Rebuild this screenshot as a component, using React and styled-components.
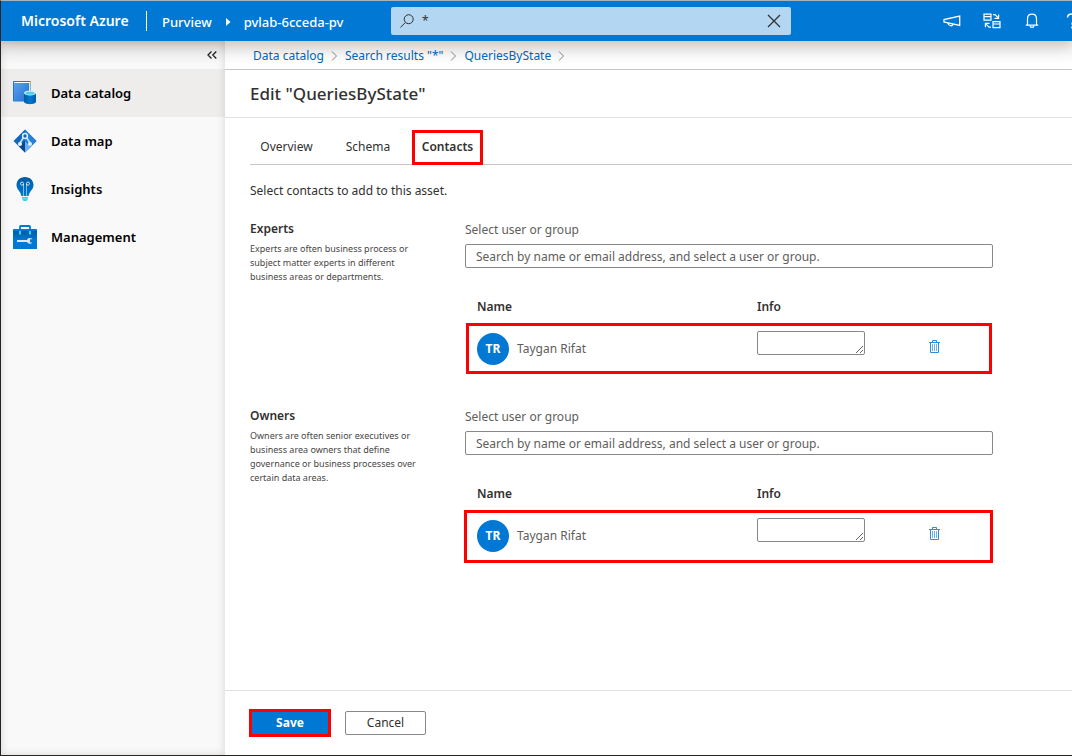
import React from 'react'
import styled, { createGlobalStyle } from 'styled-components'

const GlobalStyle = createGlobalStyle`
  * {
    box-sizing: border-box;
  }
  body {
    margin: 0;
    font-family: "Noto Sans", "Open Sans", sans-serif;
    font-size: 12px;
    line-height: 16px;
    color: #323130;
    background: #fff;
  }
  button, input, textarea {
    font: inherit;
    color: inherit;
  }
`

const Page = styled.div`
  display: flex;
  flex-direction: column;
  min-height: 100vh;
  border-top: 1px solid #a8b4bc;
  border-left: 1px solid #252423;
  border-bottom: 1px solid #252423;
  overflow: hidden;
`

const Header = styled.header`
  display: flex;
  align-items: center;
  flex: none;
  height: 40px;
  padding-left: 20px;
  color: #fff;
  background: #0078d4;
  box-shadow: 0 2px 18px 4px rgba(0, 0, 0, 0.25);
  z-index: 1;
`

const Brand = styled.a`
  width: 126px;
  padding-right: 16px;
  border-right: 1px solid #fff;
  font-size: 14px;
  line-height: 20px;
  font-weight: 600;
  color: inherit;
  text-decoration: none;
  white-space: nowrap;
`

const Path = styled.nav`
  display: flex;
  align-items: center;
  gap: 10px;
  width: 244px;
  padding-left: 15px;
  padding-top: 2px;
  font-size: 13px;
  font-weight: 500;
  white-space: nowrap;
  a {
    color: inherit;
    text-decoration: none;
  }
`

const SearchBox = styled.label`
  display: flex;
  align-items: center;
  gap: 8px;
  flex: 0 1 400px;
  height: 28px;
  padding: 0 9px;
  border-radius: 2px;
  color: #323130;
  background: #b3d7f2;
  input {
    flex: 1;
    min-width: 0;
    padding: 0;
    border: 0;
    outline: 0;
    background: none;
  }
`

const IconButton = styled.button`
  display: flex;
  align-items: center;
  justify-content: center;
  flex: none;
  width: ${props => props.$width || 16}px;
  height: ${props => props.$height || 16}px;
  padding: 0;
  border: 0;
  color: inherit;
  background: none;
`

const HeaderActions = styled.div`
  display: flex;
  flex: none;
  margin-left: auto;
  margin-right: -20px;
`

const Body = styled.div`
  display: flex;
  flex: 1;
`

const Sidebar = styled.aside`
  flex: none;
  width: 224px;
  background: #f9f9f9;
  box-shadow: inset 0 0 8px rgba(0, 0, 0, 0.14);
`

const Collapse = styled.div`
  display: flex;
  align-items: center;
  justify-content: flex-end;
  height: 28px;
  padding-right: 5px;
`

const NavItem = styled.a`
  display: flex;
  align-items: center;
  gap: 14px;
  height: 48px;
  padding-left: 12px;
  font-size: 13px;
  font-weight: 600;
  color: #000;
  text-decoration: none;
  background: ${props => (props.$active ? 'rgba(40, 20, 0, 0.05)' : 'none')};
`

const Main = styled.main`
  display: flex;
  flex-direction: column;
  flex: 1;
  min-width: 0;
`

const Breadcrumb = styled.nav`
  display: flex;
  align-items: center;
  gap: 7px;
  height: 29px;
  padding-top: 1px;
  padding-left: 28px;
  border-bottom: 1px solid #c8c6c4;
  a {
    color: #0069c2;
    text-decoration: none;
  }
`

const TitleBar = styled.div`
  display: flex;
  align-items: center;
  height: 48px;
  padding-left: 25px;
  border-bottom: 1px solid #e1dfdd;
  h1 {
    margin: 0;
    font-size: 17px;
    line-height: 22px;
    font-weight: 500;
  }
`

const Content = styled.div`
  flex: 1;
  padding: 12px 0 0 25px;
`

const Tabs = styled.div`
  display: flex;
  height: 35px;
  border-bottom: 1px solid #c8c6c4;
`

const Tab = styled.button`
  height: 35px;
  padding: 0 0 2px;
  margin-left: ${props => props.$gap}px;
  border: ${props => (props.$marked ? '3px solid #f00' : '0')};
  font-weight: ${props => (props.$marked ? 600 : 400)};
  width: ${props => props.$width}px;
  white-space: nowrap;
  background: none;
`

const Intro = styled.p`
  margin: 18px 0 22px;
`

const Section = styled.section`
  display: grid;
  grid-template-columns: 180px minmax(0, 528px);
  column-gap: 35px;
  margin-bottom: 34px;
  h2 {
    margin: 0 0 5px;
    font-size: 12px;
    line-height: 16px;
    font-weight: 600;
  }
`

const Hint = styled.p`
  margin: 0;
  font-size: 9px;
  line-height: 14px;
  color: #484644;
`

const Field = styled.label`
  display: block;
  padding-top: 1px;
  color: #605e5c;
  input {
    display: block;
    width: 100%;
    height: 24px;
    margin-top: 6px;
    padding: 0 10px;
    border: 1px solid #8a8886;
    border-radius: 2px;
    outline: 0;
  }
  input::placeholder {
    color: #605e5c;
    opacity: 1;
  }
`

const ContactTable = styled.table`
  width: 100%;
  margin-top: 28px;
  table-layout: fixed;
  border-collapse: collapse;
  th {
    height: 27px;
    padding: 3px 12px 0;
    text-align: left;
    vertical-align: top;
    font-weight: 600;
  }
  td {
    height: 51px;
    padding: 8px 12px 0;
    vertical-align: top;
  }
`

const ContactRow = styled.tr`
  position: relative;
  &::after {
    content: "";
    position: absolute;
    inset: ${props => props.$inset};
    border: 3px solid #f00;
    pointer-events: none;
  }
`

const Person = styled.div`
  display: flex;
  align-items: center;
  gap: 8px;
  padding-top: 2px;
  color: #605e5c;
`

const Avatar = styled.span`
  display: flex;
  align-items: center;
  justify-content: center;
  width: 32px;
  height: 32px;
  border-radius: 50%;
  font-weight: 700;
  color: #fff;
  background: #0078d4;
`

const InfoBox = styled.textarea`
  display: block;
  width: 108px;
  height: 24px;
  border: 1px solid #8a8886;
  border-radius: 2px;
`

const Footer = styled.footer`
  display: flex;
  align-items: center;
  gap: 14px;
  height: 65px;
  padding-left: 24px;
  border-top: 1px solid #e1dfdd;
`

const SaveButton = styled.button`
  width: 82px;
  height: 28px;
  padding: 0;
  border: 3px solid #f00;
  font-weight: 700;
  color: #fff;
  background: #0078d4;
`

const CancelButton = styled.button`
  width: 81px;
  height: 24px;
  padding: 0;
  border: 1px solid #8a8886;
  border-radius: 2px;
  background: #fff;
`

const Chevron = () => (
  <svg width="7" height="10" viewBox="0 0 7 10" fill="none" stroke="#8a8886">
    <path d="M1 .5L5.5 5L1 9.5" />
  </svg>
)

const SearchIcon = () => (
  <svg width="14" height="14" viewBox="0 0 14 14" fill="none" stroke="#323130">
    <circle cx="8.7" cy="5.2" r="4.5" />
    <path d="M5.4 8.5L.4 13.5" />
  </svg>
)

const CloseIcon = () => (
  <svg width="14" height="14" viewBox="0 0 14 14" fill="none" stroke="#323130" strokeWidth="1.3">
    <path d="M1 1L13 13M13 1L1 13" />
  </svg>
)

const MegaphoneIcon = () => (
  <svg width="18" height="14" viewBox="0 0 18 14" fill="none" stroke="#fff" strokeWidth="1.3">
    <path d="M1 5.500V8L4 8.700L16.700 11.500V2L1 5.500Z" />
    <path d="M5 9C5.300 12 9.400 12.800 10 10" />
  </svg>
)

const SwitchIcon = () => (
  <svg width="18" height="16" viewBox="0 0 18 16" fill="none" stroke="#fff" strokeWidth="1.2">
    <path d="M1 1.2H8V7.200H1ZM1 3.600H8M10 8.600H17V14.600H10ZM10 11H17" />
    <path d="M10 1.600H12L15 4.600M15.600 1.500V5.400H11.500M8 14.200H6L3 11.200M2.400 14.200V10.400H6.500" />
  </svg>
)

const BellIcon = () => (
  <svg width="14" height="16" viewBox="0 0 14 16" fill="none" stroke="#fff" strokeWidth="1.2">
    <path d="M.8 12.2H13.2M2.5 12V6C2.5 3 4.3 1.2 7 1.2S11.5 3 11.5 6V12" />
    <path d="M5 12.6C5.2 15 8.8 15 9 12.6" />
  </svg>
)

const HelpIcon = () => (
  <svg width="12" height="16" viewBox="0 0 12 16" fill="none" stroke="#fff" strokeWidth="1.5">
    <path d="M1.5 4.5C1.5 2 3.5 1 6 1S10.3 2.2 10.3 4.6C10.3 7.8 6 7.4 6 11.5M6 13.6V15.4" />
  </svg>
)

const CollapseIcon = () => (
  <svg width="10" height="8" viewBox="0 0 10 8" fill="none" stroke="#201f1e" strokeWidth="1.3">
    <path d="M4.5 .5L1 4L4.5 7.5M9.3 .5L5.8 4L9.3 7.5" />
  </svg>
)

const TrashIcon = () => (
  <svg width="11" height="13" viewBox="0 0 11 13" fill="none" stroke="#2b8ddb">
    <path d="M0 2.500H11M3.500 2.500V.500H7.500V2.500M1.500 2.500V12.500H9.500V2.500" />
    <path d="M3.500 4V11M5.500 4V11M7.500 4V11" stroke="#6db3e8" />
  </svg>
)

const CatalogIcon = () => (
  <svg width="24" height="24" viewBox="0 0 24 24">
    <defs>
      <linearGradient id="book" x1="0" y1="0" x2="1" y2="1">
        <stop offset="0" stopColor="#5ea0ef" />
        <stop offset="1" stopColor="#1f74d2" />
      </linearGradient>
      <linearGradient id="drum">
        <stop offset="0" stopColor="#005ba1" />
        <stop offset=".5" stopColor="#0078d4" />
        <stop offset="1" stopColor="#005ba1" />
      </linearGradient>
    </defs>
    <path d="M1 0H17.500V20.500H1C.4 20.500 0 20 0 19.500V1C0 .400 .4 0 1 0Z" fill="#2a74c8" />
    <path d="M1 1H17V2H1Z" fill="#fff" />
    <path d="M1 2H15.500V20H1Z" fill="url(#book)" />
    <path d="M16 2H17V11H16Z" fill="#d8eafa" />
    <path d="M11 12V20.500C11 24 23 24 23 20.500V12Z" fill="url(#drum)" />
    <ellipse cx="17" cy="12" rx="6" ry="2.500" fill="#d5eef8" />
    <ellipse cx="17" cy="12.200" rx="4.600" ry="1.600" fill="#50d0e8" />
  </svg>
)

const MapIcon = () => (
  <svg width="24" height="24" viewBox="0 0 24 24">
    <path d="M12 .5L23.500 12L12 23.500L.5 12Z" fill="#1267bd" />
    <path d="M12 .5L23.500 12L18 17.500L12 11Z" fill="#2a80d8" />
    <path d="M12 12L18 18L12 23.500Z" fill="#6aaef5" />
    <path d="M12 12V23.500L6 17.500Z" fill="#084a8c" />
    <path d="M10.500 8.500L7 14M13.500 8.500L17 14" stroke="#c3e6fb" strokeWidth="1.600" />
    <circle cx="12" cy="7" r="2.400" fill="#1267bd" stroke="#d6effc" strokeWidth="1.500" />
    <circle cx="7" cy="15" r="2" fill="#e6f6fd" />
    <circle cx="17" cy="15" r="2" fill="#e6f6fd" />
  </svg>
)

const BulbIcon = () => (
  <svg width="24" height="24" viewBox="0 0 24 24">
    <defs>
      <linearGradient id="bulb" x1="0" y1="0" x2="0" y2="1">
        <stop offset="0" stopColor="#005ba1" />
        <stop offset="1" stopColor="#0078d4" />
      </linearGradient>
    </defs>
    <path d="M12 0C17 0 20.500 3.600 20.500 8C20.500 12.500 16.500 14 15.600 19H8.400C7.500 14 3.500 12.500 3.500 8C3.500 3.600 7 0 12 0Z" fill="url(#bulb)" />
    <path d="M10.500 19V8M13.500 19V8" stroke="#7fb9e8" />
    <path d="M10.500 8H8.500A1.500 1.500 0 1 1 10.500 6.500ZM13.500 8H15.500A1.500 1.500 0 1 0 13.500 6.500Z" fill="none" stroke="#d5ecfa" />
    <path d="M9 20H15V22L13.500 24H10.500L9 22Z" fill="#32d4f5" />
    <path d="M9 21.700H15" stroke="#9cebff" strokeWidth=".6" />
  </svg>
)

const ToolboxIcon = () => (
  <svg width="24" height="24" viewBox="0 0 24 24">
    <defs>
      <linearGradient id="toolbox" x1="0" y1="0" x2="0" y2="1">
        <stop offset="0" stopColor="#005ba1" />
        <stop offset="1" stopColor="#0078d4" />
      </linearGradient>
    </defs>
    <path d="M7 5V1.800C7 1.200 7.300 1 7.800 1H16.200C16.700 1 17 1.200 17 1.800V5" fill="none" stroke="#0078d4" strokeWidth="1.800" />
    <rect y="4" width="24" height="20" rx=".6" fill="#0078d4" />
    <rect y="6" width="24" height="9" fill="url(#toolbox)" />
    <path d="M6 6H8V9L7 10L6 9ZM16 6H18V9L17 10L16 9Z" fill="#32d4f5" />
    <path d="M4 15H14C15 12.500 18 12.500 19.500 14.200H17V17.400H19.500C18 19.200 15 19 14 17H4Z" fill="#e4e4e4" />
  </svg>
)

const navItems = [
  { label: 'Data catalog', icon: CatalogIcon, active: true },
  { label: 'Data map', icon: MapIcon },
  { label: 'Insights', icon: BulbIcon },
  { label: 'Management', icon: ToolboxIcon }
]

const crumbs = ['Data catalog', 'Search results "*"', 'QueriesByState']

const ContactSection = (props) => {
  const { id, title, hint, inset } = props
  return (
    <Section>
      <div>
        <h2>{title}</h2>
        <Hint>{hint}</Hint>
      </div>
      <div>
        <Field htmlFor={id}>
          Select user or group
          <input id={id} type="text" placeholder="Search by name or email address, and select a user or group." />
        </Field>
        <ContactTable>
          <colgroup>
            <col width="280" />
            <col width="160" />
            <col />
          </colgroup>
          <thead>
            <tr>
              <th>Name</th>
              <th>Info</th>
              <th aria-label="Actions" />
            </tr>
          </thead>
          <tbody>
            <ContactRow $inset={inset}>
              <td>
                <Person>
                  <Avatar>TR</Avatar>
                  Taygan Rifat
                </Person>
              </td>
              <td><InfoBox aria-label="Info" /></td>
              <td>
                <IconButton $width={34} $height={30} aria-label="Remove contact"><TrashIcon /></IconButton>
              </td>
            </ContactRow>
          </tbody>
        </ContactTable>
      </div>
    </Section>
  )
}

const App = () => (
  <Page>
    <GlobalStyle />
    <Header>
      <Brand href="#">Microsoft Azure</Brand>
      <Path aria-label="Service">
        <a href="#">Purview</a>
        <svg width="12" height="8" viewBox="0 0 12 8"><path d="M4 0L8.500 4L4 8Z" fill="#fff" /></svg>
        <a href="#">pvlab-6cceda-pv</a>
      </Path>
      <SearchBox>
        <SearchIcon />
        <input type="text" aria-label="Search" defaultValue="*" />
        <IconButton aria-label="Clear search"><CloseIcon /></IconButton>
      </SearchBox>
      <HeaderActions>
        <IconButton $width={40} $height={40} aria-label="Announcements"><MegaphoneIcon /></IconButton>
        <IconButton $width={40} $height={40} aria-label="Switch account"><SwitchIcon /></IconButton>
        <IconButton $width={40} $height={40} aria-label="Notifications"><BellIcon /></IconButton>
        <IconButton $width={40} $height={40} aria-label="Help"><HelpIcon /></IconButton>
      </HeaderActions>
    </Header>
    <Body>
      <Sidebar>
        <Collapse>
          <IconButton aria-label="Collapse menu"><CollapseIcon /></IconButton>
        </Collapse>
        <nav>
          {navItems.map(({ label, icon: Icon, active }) => (
            <NavItem key={label} href="#" $active={active}>
              <Icon />
              {label}
            </NavItem>
          ))}
        </nav>
      </Sidebar>
      <Main>
        <Breadcrumb aria-label="Breadcrumb">
          {crumbs.map(crumb => (
            <React.Fragment key={crumb}>
              <a href="#">{crumb}</a>
              <Chevron />
            </React.Fragment>
          ))}
        </Breadcrumb>
        <TitleBar>
          <h1>Edit "QueriesByState"</h1>
        </TitleBar>
        <Content>
          <Tabs role="tablist">
            <Tab role="tab" $gap={0} $width={73}>Overview</Tab>
            <Tab role="tab" $gap={13} $width={64}>Schema</Tab>
            <Tab role="tab" $gap={12} $width={71} $marked aria-selected="true">Contacts</Tab>
          </Tabs>
          <Intro>Select contacts to add to this asset.</Intro>
          <ContactSection
            id="experts"
            title="Experts"
            hint="Experts are often business process or subject matter experts in different business areas or departments."
            inset="0 1px"
          />
          <ContactSection
            id="owners"
            title="Owners"
            hint="Owners are often senior executives or business area owners that define governance or business processes over certain data areas."
            inset="0 0 -2px -1px"
          />
        </Content>
        <Footer>
          <SaveButton>Save</SaveButton>
          <CancelButton>Cancel</CancelButton>
        </Footer>
      </Main>
    </Body>
  </Page>
)

export default App
